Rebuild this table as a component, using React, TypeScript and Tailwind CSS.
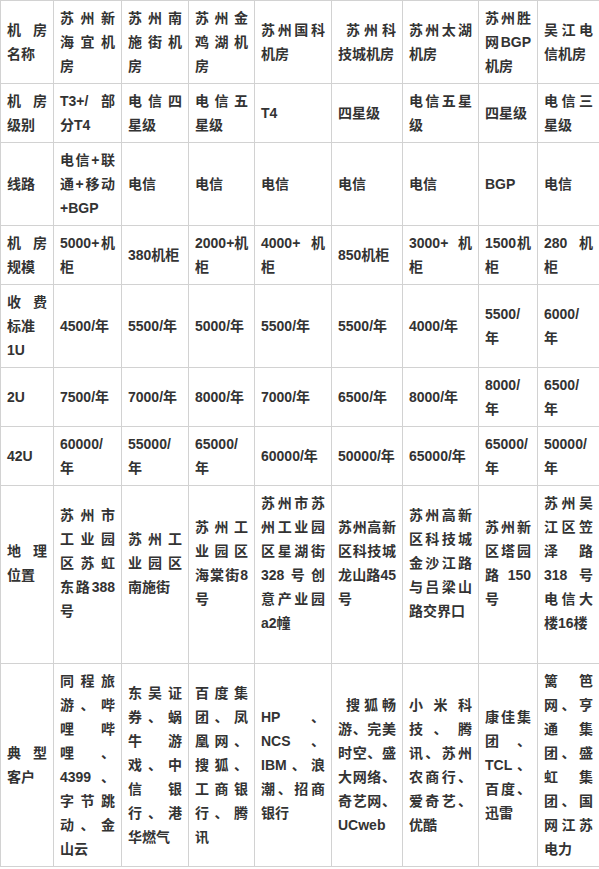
import React from 'react'

// each cell is a list of lines; every line but the last is justified.
// a line starting with "=" is left as is (no justify)
type Row = { h: string; pad?: string; cells: string[][] }

const COLS = ['w-[53px]', 'w-[68px]', 'w-[67px]', 'w-[66px]', 'w-[77px]', 'w-[71px]', 'w-[76px]', 'w-[59px]', 'w-[62px]']

const ROWS: Row[] = [
  {
    h: 'h-[83px]',
    cells: [
      ['机房', '名称'],
      ['苏州新', '海宜机', '房'],
      ['苏州南', '施街机', '房'],
      ['苏州金', '鸡湖机', '房'],
      ['苏州国科', '机房'],
      ['\u00a0苏州科', '技城机房'],
      ['苏州太湖', '机房'],
      ['苏州胜', '网BGP', '机房'],
      ['吴江电', '信机房'],
    ],
  },
  {
    h: 'h-[59px]',
    cells: [
      ['机房', '级别'],
      ['T3+/部', '分T4'],
      ['电信四', '星级'],
      ['电信五', '星级'],
      ['T4'],
      ['四星级'],
      ['电信五星', '级'],
      ['四星级'],
      ['电信三', '星级'],
    ],
  },
  {
    h: 'h-[81px]',
    cells: [
      ['线路'],
      ['电信+联', '通+移动', '+BGP'],
      ['电信'],
      ['电信'],
      ['电信'],
      ['电信'],
      ['电信'],
      ['BGP'],
      ['电信'],
    ],
  },
  {
    h: 'h-[58px]',
    cells: [
      ['机房', '规模'],
      ['5000+机', '柜'],
      ['380机柜'],
      ['2000+机', '柜'],
      ['4000+机', '柜'],
      ['850机柜'],
      ['3000+机', '柜'],
      ['1500机', '柜'],
      ['280机', '柜'],
    ],
  },
  {
    h: 'h-[82px]',
    cells: [
      ['收费', '=标准', '1U'],
      ['4500/年'],
      ['5500/年'],
      ['5000/年'],
      ['5500/年'],
      ['5500/年'],
      ['4000/年'],
      ['5500/', '年'],
      ['6000/', '年'],
    ],
  },
  {
    h: 'h-[59px]',
    cells: [
      ['2U'],
      ['7500/年'],
      ['7000/年'],
      ['8000/年'],
      ['7000/年'],
      ['6500/年'],
      ['8000/年'],
      ['8000/', '年'],
      ['6500/', '年'],
    ],
  },
  {
    h: 'h-[57px]',
    cells: [
      ['42U'],
      ['60000/', '年'],
      ['55000/', '年'],
      ['65000/', '年'],
      ['60000/年'],
      ['50000/年'],
      ['65000/年'],
      ['65000/', '年'],
      ['50000/', '年'],
    ],
  },
  {
    h: 'h-[178px]',
    pad: 'pt-[5px] pb-[28px]',
    cells: [
      ['地理', '位置'],
      ['苏州市', '工业园', '区苏虹', '东路388', '号'],
      ['苏州工', '业园区', '南施街'],
      ['苏州工', '业园区', '海棠街8', '号'],
      ['苏州市苏', '州工业园', '区星湖街', '328号创', '意产业园', 'a2幢'],
      ['苏州高新', '区科技城', '龙山路45', '号'],
      ['苏州高新', '区科技城', '金沙江路', '与吕梁山', '路交界口'],
      ['苏州新', '区塔园', '路150', '号'],
      ['苏州吴', '江区笠', '泽路', '318号', '电信大', '楼16楼'],
    ],
  },
  {
    h: 'h-[202px]',
    cells: [
      ['典型', '客户'],
      ['同程旅', '游、哔', '哩哔', '哩、', '4399、', '字节跳', '动、金', '山云'],
      ['东吴证', '券、蜗', '牛游', '戏、中', '信银', '行、港', '华燃气'],
      ['百度集', '团、凤', '凰网、', '搜狐、', '工商银', '行、腾', '讯'],
      ['HP、', 'NCS、', 'IBM、浪', '潮、招商', '银行'],
      ['\u00a0搜狐畅', '游、完美', '时空、盛', '大网络、', '奇艺网、', 'UCweb'],
      ['小米科', '技、腾', '讯、苏州', '农商行、', '爱奇艺、', '优酷'],
      ['康佳集', '团、', 'TCL、', '百度、', '迅雷'],
      ['篱笆', '网、亨', '通集', '团、盛', '虹集', '团、国', '网江苏', '电力'],
    ],
  },
]

function Cell({ lines, pad }: { lines: string[]; pad?: string }) {
  return (
    <td className={`border border-[#d2d2d2] px-[6px] ${pad ?? 'py-[5px]'} align-middle`}>
      {lines.map((line, i) => {
        const plain = line.startsWith('=')
        const text = plain ? line.slice(1) : line
        const justify = !plain && i < lines.length - 1
        return (
          <div
            key={i}
            className={`whitespace-nowrap ${justify ? 'text-justify [text-align-last:justify]' : 'text-left'}`}
          >
            {text}
          </div>
        )
      })}
    </td>
  )
}

export default function App() {
  return (
    <div
      className="w-[599px] h-[869px] bg-white overflow-hidden text-[14px] leading-[24px] font-semibold text-[#333]"
      style={{ fontFamily: '"Liberation Sans", "Noto Sans CJK SC", sans-serif' }}
    >
      <table className="table-fixed w-[599px] border-collapse">
        <colgroup>
          {COLS.map((w, i) => (
            <col key={i} className={w} />
          ))}
        </colgroup>
        <tbody>
          {ROWS.map((row, r) => (
            <tr key={r} className={row.h}>
              {row.cells.map((lines, c) => (
                <Cell key={c} lines={lines} pad={row.pad} />
              ))}
            </tr>
          ))}
        </tbody>
      </table>
    </div>
  )
}
